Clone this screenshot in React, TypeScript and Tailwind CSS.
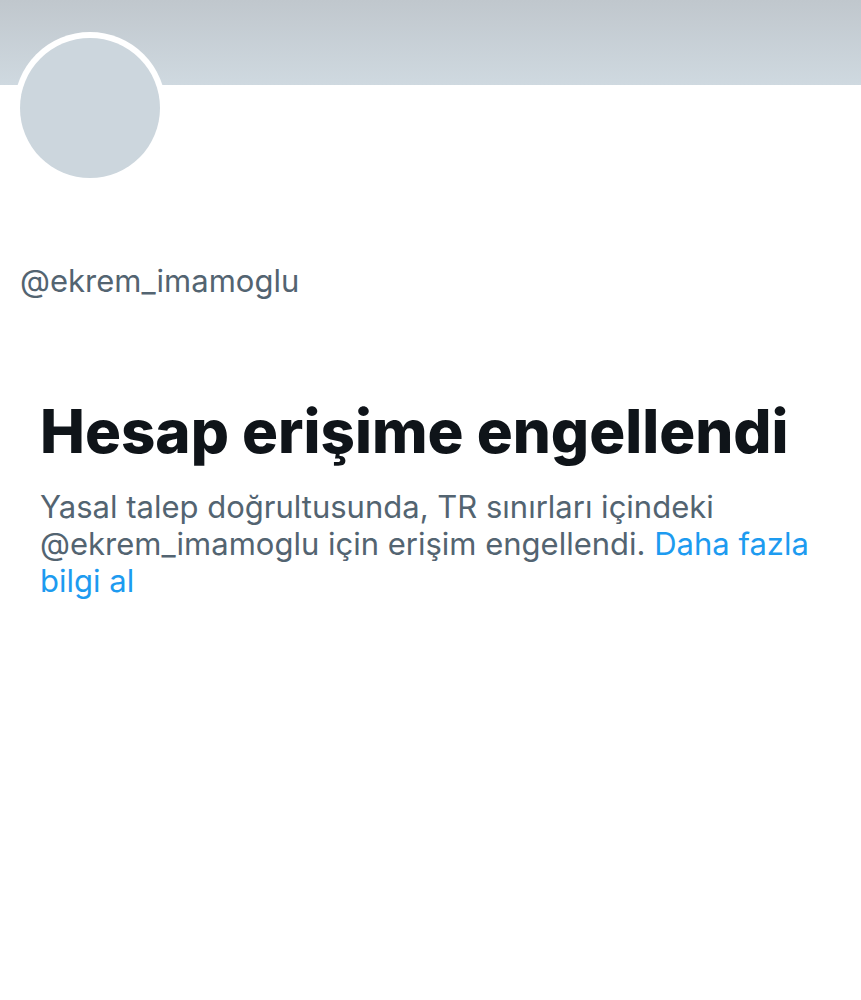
import React from "react";

const font = { fontFamily: "Inter, 'Noto Sans', sans-serif" };

const App = () => {
    return (
        <div className="w-[861px] h-[1000px] bg-white overflow-hidden" style={font}>
            <div className="h-[85px] bg-gradient-to-b from-[#c0c7cd] to-[#cfd9e0]" />
            <div className="px-[14px] -mt-[53px]">
                <div className="w-[152px] h-[152px] rounded-full bg-white p-[6px]">
                    <div className="w-full h-full rounded-full bg-[#ccd6dd]" />
                </div>
            </div>
            <div className="px-5 mt-[78px] text-[31px] leading-[37px] text-[#536471]">
                @ekrem_imamoglu
            </div>
            <div className="px-10 mt-[99px]">
                <h1 className="text-[60px] leading-[66px] font-extrabold text-[#0f1419]">
                    Hesap erişime engellendi
                </h1>
                <p className="mt-[24px] text-[31px] leading-[37px] text-[#536471]">
                    Yasal talep doğrultusunda, TR sınırları içindeki @ekrem_imamoglu için erişim engellendi.{" "}
                    <span className="text-[#1d9bf0]">Daha fazla bilgi al</span>
                </p>
            </div>
        </div>
    );
};

export default App;
